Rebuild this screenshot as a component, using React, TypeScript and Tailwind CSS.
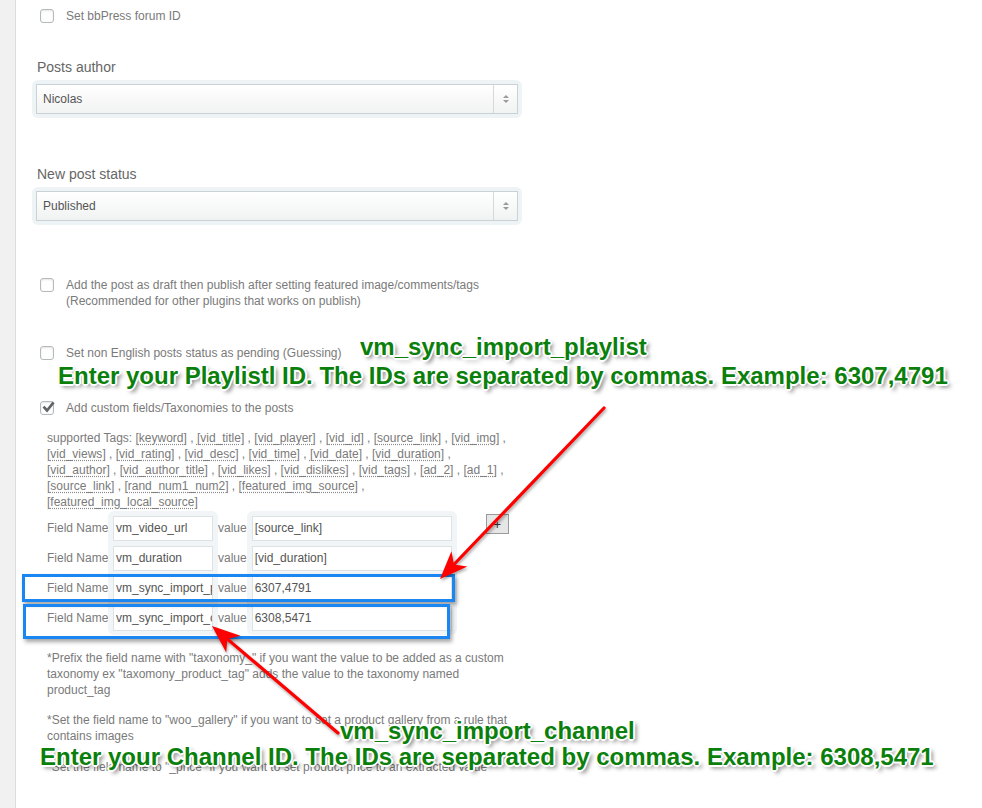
import React from 'react';

// white halo + soft drop shadow used by the green annotations
const halo =
  '[text-shadow:-1px_-1px_0_#fff,1px_-1px_0_#fff,-1px_1px_0_#fff,1px_1px_0_#fff,0_-2px_0_#fff,0_2px_0_#fff,-2px_0_0_#fff,2px_0_0_#fff,3px_3px_4px_rgba(0,0,0,0.55)]';

const tags = [
  'keyword', 'vid_title', 'vid_player', 'vid_id', 'source_link', 'vid_img',
  'vid_views', 'vid_rating', 'vid_desc', 'vid_time', 'vid_date', 'vid_duration',
  'vid_author', 'vid_author_title', 'vid_likes', 'vid_dislikes', 'vid_tags', 'ad_2', 'ad_1',
  'source_link', 'rand_num1_num2', 'featured_img_source', 'featured_img_local_source',
];

const fields = [
  { name: 'vm_video_url', value: '[source_link]' },
  { name: 'vm_duration', value: '[vid_duration]' },
  { name: 'vm_sync_import_playlist', value: '6307,4791' },
  { name: 'vm_sync_import_channel', value: '6308,5471' },
];

function Checkbox({ checked = false }: { checked?: boolean }) {
  return (
    <span className="relative block w-[14px] h-[14px] shrink-0 rounded-[3px] border border-[#b4b9be] bg-[#fefefe] shadow-[inset_0_1px_2px_rgba(0,0,0,0.1)]">
      {checked && (
        <svg className="absolute -left-[1px] -top-[3px]" width="17" height="17" viewBox="0 0 17 17">
          <path d="M2.5 8.6 L4.6 6.7 L7 9.4 L12.6 2.6 L14.6 4.3 L7.1 13.4 Z" fill="#5f6468" />
        </svg>
      )}
    </span>
  );
}

function CheckRow({ checked, children }: { checked?: boolean; children: React.ReactNode }) {
  return (
    <div className="flex items-start gap-[12px] text-[12px] leading-[16px] text-[#7a7a7a]">
      <div className="pt-[1px]">
        <Checkbox checked={checked} />
      </div>
      <div>{children}</div>
    </div>
  );
}

function Select({ value }: { value: string }) {
  return (
    <div className="w-[490px] rounded-[6px] bg-[#eef3f6] px-[4px] py-[4px]">
      <div className="flex h-[30px] border border-[#c9d2d7] bg-gradient-to-b from-white to-[#f1f2f2] text-[12px] text-[#555]">
        <div className="flex flex-1 items-center pl-[6px]">{value}</div>
        <div className="flex w-[24px] flex-col items-center justify-center gap-[2px] border-l border-[#d6d9db]">
          <span className="block h-0 w-0 border-x-[3px] border-b-[3px] border-x-transparent border-b-[#9a9a9a]" />
          <span className="block h-0 w-0 border-x-[3px] border-t-[3px] border-x-transparent border-t-[#9a9a9a]" />
        </div>
      </div>
    </div>
  );
}

function arrowHead(tx: number, ty: number, fx: number, fy: number) {
  const dx = tx - fx;
  const dy = ty - fy;
  const len = Math.hypot(dx, dy);
  const ux = dx / len;
  const uy = dy / len;
  const nx = -uy;
  const ny = ux;
  const L = 28;
  const W = 11;
  const bx = tx - ux * L;
  const by = ty - uy * L;
  const nxp = tx - ux * (L * 0.72);
  const nyp = ty - uy * (L * 0.72);
  return `${tx},${ty} ${bx + nx * W},${by + ny * W} ${nxp},${nyp} ${bx - nx * W},${by - ny * W}`;
}

function Arrow({ from, to }: { from: [number, number]; to: [number, number] }) {
  const dx = to[0] - from[0];
  const dy = to[1] - from[1];
  const len = Math.hypot(dx, dy);
  const endX = to[0] - (dx / len) * 18;
  const endY = to[1] - (dy / len) * 18;
  return (
    <g>
      <line x1={from[0]} y1={from[1]} x2={endX} y2={endY} stroke="#ff0000" strokeWidth="3.2" strokeLinecap="round" />
      <polygon points={arrowHead(to[0], to[1], from[0], from[1])} fill="#ff0000" />
    </g>
  );
}

export default function App() {
  return (
    <div className="relative flex w-[982px] h-[808px] overflow-hidden bg-white font-['Liberation_Sans',Arial,sans-serif]">
      <div className="w-[16px] shrink-0 border-r border-[#dcdcdc] bg-[#f1f1f1]" />

      <div className="flex flex-col pl-[24px] pt-[8px]">
        <CheckRow>Set bbPress forum ID</CheckRow>

        <div className="mt-[33px] -ml-[3px] text-[14px] leading-[20px] text-[#666]">Posts author</div>
        <div className="mt-[3px] -ml-[8px]">
          <Select value="Nicolas" />
        </div>

        <div className="mt-[46px] -ml-[3px] text-[14px] leading-[20px] text-[#666]">New post status</div>
        <div className="mt-[3px] -ml-[8px]">
          <Select value="Published" />
        </div>

        <div className="mt-[52px]">
          <CheckRow>
            Add the post as draft then publish after setting featured image/comments/tags
            <br />
            (Recommended for other plugins that works on publish)
          </CheckRow>
        </div>

        <div className="mt-[36px]">
          <CheckRow>Set non English posts status as pending (Guessing)</CheckRow>
        </div>

        <div className="mt-[39px]">
          <CheckRow checked>Add custom fields/Taxonomies to the posts</CheckRow>
        </div>

        <div className="ml-[7px] mt-[14px] w-[465px] text-[12px] leading-[16px] text-[#7a7a7a]">
          supported Tags:{' '}
          {tags.map((t, i) => (
            <React.Fragment key={i}>
              <span className="underline decoration-dotted decoration-[#8a8a8a] underline-offset-[2px]">[{t}]</span>
              {i < tags.length - 1 ? ' , ' : ''}
            </React.Fragment>
          ))}
        </div>

        <div className="ml-[7px] mt-[1px] flex items-start text-[12px] text-[#7a7a7a]">
          <div className="flex w-[61px] flex-col py-[2px]">
            {fields.map((f) => (
              <div key={f.name} className="flex h-[30px] items-center whitespace-nowrap">Field Name</div>
            ))}
          </div>
          <div className="flex flex-col rounded-[6px] bg-[#f1f5f7] px-[5px] py-[2px]">
            {fields.map((f) => (
              <div key={f.name} className="flex h-[30px] items-center">
                <div className="flex h-[25px] w-[100px] items-center overflow-hidden whitespace-nowrap border border-[#dde2e5] bg-white pl-[2px] text-[#555]">
                  {f.name}
                </div>
              </div>
            ))}
          </div>
          <div className="flex flex-col py-[2px]">
            {fields.map((f) => (
              <div key={f.name} className="flex h-[30px] items-center">value</div>
            ))}
          </div>
          <div className="flex flex-col rounded-[6px] bg-[#f1f5f7] px-[5px] py-[2px]">
            {fields.map((f) => (
              <div key={f.name} className="flex h-[30px] items-center">
                <div className="flex h-[25px] w-[200px] items-center overflow-hidden whitespace-nowrap border border-[#dde2e5] bg-white pl-[2px] text-[#555]">
                  {f.value}
                </div>
              </div>
            ))}
          </div>
          <button className="ml-[29px] mt-[3px] flex h-[20px] w-[23px] items-center justify-center border border-[#9a9a9a] bg-[#e6e6e6] text-[13px] leading-none text-[#333]">
            +
          </button>
        </div>

        <div className="ml-[7px] mt-[15px] w-[465px] text-[12px] leading-[16px] text-[#7a7a7a]">
          *Prefix the field name with "taxonomy_" if you want the value to be added as a custom taxonomy ex
          "taxomony_product_tag" adds the value to the taxonomy named product_tag
        </div>
        <div className="ml-[7px] mt-[14px] w-[465px] text-[12px] leading-[16px] text-[#7a7a7a]">
          *Set the field name to "woo_gallery" if you want to set a product gallery from a rule that contains images
        </div>
        <div className="ml-[7px] mt-[15px] w-[465px] text-[12px] leading-[16px] text-[#7a7a7a]">
          *Set the field name to "_price" if you want to set product price to an extracted value
        </div>
      </div>

      {/* highlight boxes */}
      <div className="absolute left-[22px] top-[574px] h-[28px] w-[433px] border-[3px] border-[#1a86f2] shadow-[2px_3px_4px_rgba(0,0,0,0.35)]" />
      <div className="absolute left-[23px] top-[604px] h-[35px] w-[427px] border-[3px] border-[#1a86f2] shadow-[2px_3px_4px_rgba(0,0,0,0.35)]" />

      {/* arrows */}
      <svg className="pointer-events-none absolute left-0 top-0 [filter:drop-shadow(1px_2px_1.5px_rgba(0,0,0,0.35))]" width="982" height="808">
        <Arrow from={[604, 408]} to={[440, 579]} />
        <Arrow from={[338, 733]} to={[212, 626]} />
      </svg>

      {/* annotations */}
      <div className={`absolute left-[360px] top-[333px] whitespace-nowrap text-[24px] font-bold leading-[28px] text-[#0b7f0b] ${halo}`}>
        vm_sync_import_playlist
      </div>
      <div className={`absolute left-[58px] top-[362px] whitespace-nowrap text-[24px] font-bold leading-[28px] text-[#0b7f0b] ${halo}`}>
        Enter your Playlistl ID. The IDs are separated by commas. Example: 6307,4791
      </div>
      <div className={`absolute left-[340px] top-[717px] whitespace-nowrap text-[24px] font-bold leading-[28px] text-[#0b7f0b] ${halo}`}>
        vm_sync_import_channel
      </div>
      <div className={`absolute left-[40px] top-[743px] whitespace-nowrap text-[24px] font-bold leading-[28px] text-[#0b7f0b] ${halo}`}>
        Enter your Channel ID. The IDs are separated by commas. Example: 6308,5471
      </div>
    </div>
  );
}
